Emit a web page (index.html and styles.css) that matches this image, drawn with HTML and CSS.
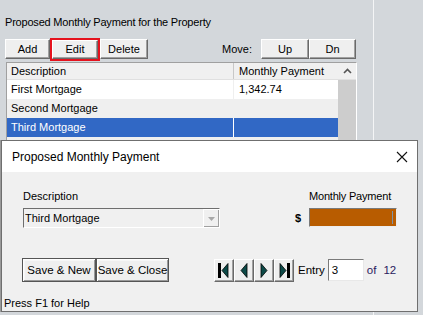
FILE: index.html
```html
<!DOCTYPE html>
<html>
<head>
<meta charset="utf-8">
<link rel="stylesheet" href="styles.css">
</head>
<body>
<div class="app">
  <div class="main">
    <div class="caption">Proposed Monthly Payment for the Property</div>
    <div class="toolbar">
      <button class="btn btn-add">Add</button>
      <button class="btn btn-edit">Edit</button>
      <button class="btn btn-delete">Delete</button>
      <span class="move-label">Move:</span>
      <button class="btn btn-up">Up</button>
      <button class="btn btn-dn">Dn</button>
    </div>
    <div class="grid">
      <div class="grid-head">
        <div class="col-desc">Description</div>
        <div class="col-pay">Monthly Payment</div>
        <div class="scroll-up"><svg width="9" height="6" viewBox="0 0 9 6"><path d="M1 5 L4.5 1.5 L8 5" fill="none" stroke="#555" stroke-width="1.6"/></svg></div>
      </div>
      <div class="grid-body">
        <div class="rows">
          <div class="row"><div class="col-desc">First Mortgage</div><div class="col-pay">1,342.74</div></div>
          <div class="row alt"><div class="col-desc">Second Mortgage</div><div class="col-pay"></div></div>
          <div class="row sel"><div class="col-desc">Third Mortgage</div><div class="col-pay"></div></div>
          <div class="row alt"><div class="col-desc"></div><div class="col-pay"></div></div>
        </div>
        <div class="scroll-track"></div>
      </div>
    </div>
  </div>
  <div class="side"></div>

  <div class="dialog">
    <div class="titlebar">
      <span class="title">Proposed Monthly Payment</span>
      <svg class="close" width="12" height="12" viewBox="0 0 12 12"><path d="M1 1 L11 11 M11 1 L1 11" stroke="#111" stroke-width="1.1"/></svg>
    </div>
    <div class="dlg-body">
      <div class="fields">
        <div class="field-desc">
          <div class="label">Description</div>
          <div class="combo">
            <span class="combo-text">Third Mortgage</span>
            <span class="combo-btn"><svg width="7" height="4" viewBox="0 0 7 4"><path d="M0 0 H7 L3.5 4 Z" fill="#a8a8a8"/></svg></span>
          </div>
        </div>
        <div class="field-pay">
          <div class="label">Monthly Payment</div>
          <div class="pay-row">
            <span class="dollar">$</span>
            <div class="pay-input"><span class="caret"></span></div>
          </div>
        </div>
      </div>
      <div class="actions">
        <button class="btn2 save-new">Save &amp; New</button>
        <button class="btn2 save-close">Save &amp; Close</button>
        <div class="nav">
          <button class="navbtn"><svg width="14" height="15" viewBox="0 0 14 15"><rect x="1" y="0" width="3" height="15" fill="#000"/><path d="M11 0.5 L5 7.5 L11 14.5 Z" fill="#0d4a48" stroke="#000" stroke-width="0.8"/></svg></button>
          <button class="navbtn"><svg width="14" height="15" viewBox="0 0 14 15"><path d="M10 0.5 L4 7.5 L10 14.5 Z" fill="#0d4a48" stroke="#000" stroke-width="0.8"/></svg></button>
          <button class="navbtn"><svg width="14" height="15" viewBox="0 0 14 15"><path d="M4 0.5 L10 7.5 L4 14.5 Z" fill="#0d4a48" stroke="#000" stroke-width="0.8"/></svg></button>
          <button class="navbtn"><svg width="14" height="15" viewBox="0 0 14 15"><path d="M3 0.5 L9 7.5 L3 14.5 Z" fill="#0d4a48" stroke="#000" stroke-width="0.8"/><rect x="10" y="0" width="3" height="15" fill="#000"/></svg></button>
        </div>
        <span class="entry-label">Entry</span>
        <div class="entry-input">3</div>
        <span class="of">of</span>
        <span class="total">12</span>
      </div>
      <div class="status">Press F1 for Help</div>
    </div>
  </div>
</div>
</body>
</html>
```
FILE: styles.css
```css
* { box-sizing: border-box; }
html, body { margin: 0; padding: 0; }
body {
  width: 423px;
  height: 315px;
  overflow: hidden;
  background: #d3d7db;
  font-family: "Liberation Sans", Arial, sans-serif;
  font-size: 11px;
  color: #000;
}
.app {
  position: relative;
  width: 423px;
  height: 315px;
  display: flex;
}
.main {
  width: 373px;
  padding: 15px 0 0 5px;
}
.side {
  flex: 1;
  border-left: 1px solid #f4f5f6;
}
.caption {
  height: 14px;
  line-height: 14px;
  letter-spacing: -0.2px;
}
.toolbar {
  display: flex;
  align-items: center;
  margin-top: 10px;
  height: 20px;
}
.btn {
  font: inherit;
  height: 20px;
  padding: 0;
  background: #efefef;
  border: 1px solid;
  border-color: #fff #6a6a6a #6a6a6a #fff;
  box-shadow: inset -1px -1px 0 #a0a0a0;
  color: #000;
}
.btn-add { width: 45px; }
.btn-edit {
  width: 46px;
  margin: 0 2px;
  height: 19px;
  outline: 2px solid #e5131e;
  outline-offset: 0;
}
.btn-delete { width: 48px; }
.move-label { margin-left: 74px; width: 39px; }
.btn-up { width: 48px; }
.btn-dn { width: 47px; }

.grid {
  margin-top: 3px;
  margin-left: 1px;
  width: 351px;
  border: 1px solid;
  border-color: #a0a0a0 #fff #fff #a0a0a0;
  background: #fff;
}
.grid-head {
  display: flex;
  height: 17px;
  line-height: 16px;
  background: #f0f0f0;
  border-bottom: 1px solid #e0e0e0;
}
.grid-head .col-desc { border-right: 1px solid #c8c8c8; }
.col-desc { width: 227px; padding-left: 4px; }
.col-pay { width: 104px; padding-left: 5px; }
.scroll-up {
  width: 18px;
  display: flex;
  align-items: center;
  justify-content: center;
  background: #f0f0f0;
}
.grid-body { display: flex; }
.rows { width: 331px; }
.row {
  display: flex;
  height: 19px;
  line-height: 19px;
  background: #fff;
}
.row .col-desc { border-right: 1px solid #efefef; }
.row.alt { background: #efefef; }
.row.sel { background: #3168c5; color: #fff; }
.row.sel .col-desc { border-right: 1px solid #fff; }
.scroll-track { width: 18px; background: #cdcdcd; height: 80px; }

.dialog {
  position: absolute;
  left: 1px;
  top: 140px;
  width: 417px;
  height: 172px;
  border: 1px solid #6f6f6f;
  background: #f0f0f0;
  box-shadow: -1px 0 0 #9a9a9a;
}
.titlebar {
  height: 31px;
  background: #fff;
  display: flex;
  align-items: center;
  justify-content: space-between;
  padding: 0 9px 0 10px;
}
.title {
  font-size: 12px;
  font-family: "Liberation Sans", Arial, sans-serif;
}
.dlg-body {
  padding: 17px 0 0 0;
}
.fields {
  display: flex;
  height: 39px;
}
.label { height: 14px; line-height: 14px; }
.field-desc { margin-left: 21px; width: 197px; }
.combo {
  margin-top: 5px;
  height: 20px;
  display: flex;
  border: 1px solid;
  border-color: #6e6e6e #fff #fff #6e6e6e;
  background: #f0f0f0;
}
.combo-text { flex: 1; line-height: 18px; padding-left: 1px; }
.combo-btn {
  width: 16px;
  display: flex;
  align-items: center;
  justify-content: center;
  border-left: 1px solid #fff;
  border-top: 1px solid #fff;
  box-shadow: inset -1px -1px 0 #a0a0a0;
}
.field-pay { margin-left: 75px; }
.field-pay .label { padding-left: 14px; letter-spacing: -0.2px; }
.pay-row { display: flex; margin-top: 5px; align-items: center; }
.dollar { width: 14px; font-weight: bold; font-size: 11px; }
.pay-input {
  width: 88px;
  height: 19px;
  background: #b85c00;
  border: 1px solid;
  border-color: #7a7a7a #ececec #ececec #7a7a7a;
  position: relative;
}
.caret {
  position: absolute;
  right: 3px;
  top: 2px;
  width: 1px;
  height: 13px;
  background: #7f93a8;
}
.actions {
  display: flex;
  align-items: center;
  margin-top: 30px;
  height: 24px;
  padding-left: 20px;
}
.btn2 {
  font: inherit;
  font-size: 11.5px;
  height: 24px;
  padding: 0;
  background: #efefef;
  border: 1px solid #555;
  box-shadow: inset 1px 1px 0 #fff, inset -1px -1px 0 #9a9a9a, inset 2px 2px 0 #f7f7f7;
  color: #000;
}
.save-new { width: 74px; }
.save-close { width: 73px; }
.nav { display: flex; margin-left: 45px; }
.navbtn {
  width: 20px;
  height: 23px;
  padding: 0;
  display: flex;
  align-items: center;
  justify-content: center;
  background: #efefef;
  border: 1px solid;
  border-color: #fff #6a6a6a #6a6a6a #fff;
  box-shadow: inset -1px -1px 0 #a0a0a0;
}
.entry-label { margin-left: 4px; font-size: 11.5px; }
.entry-input {
  margin-left: 3px;
  width: 36px;
  height: 22px;
  line-height: 20px;
  padding-left: 3px;
  background: #fff;
  border: 1px solid;
  border-color: #7a7a7a #e8e8e8 #e8e8e8 #7a7a7a;
  font-size: 11.5px;
}
.of { margin-left: 3px; font-size: 11.5px; color: #2a1a5e; }
.total { margin-left: 7px; font-size: 11.5px; color: #2a1a5e; }
.status {
  margin-top: 14px;
  padding-left: 2px;
  height: 14px;
  line-height: 14px;
}
```
